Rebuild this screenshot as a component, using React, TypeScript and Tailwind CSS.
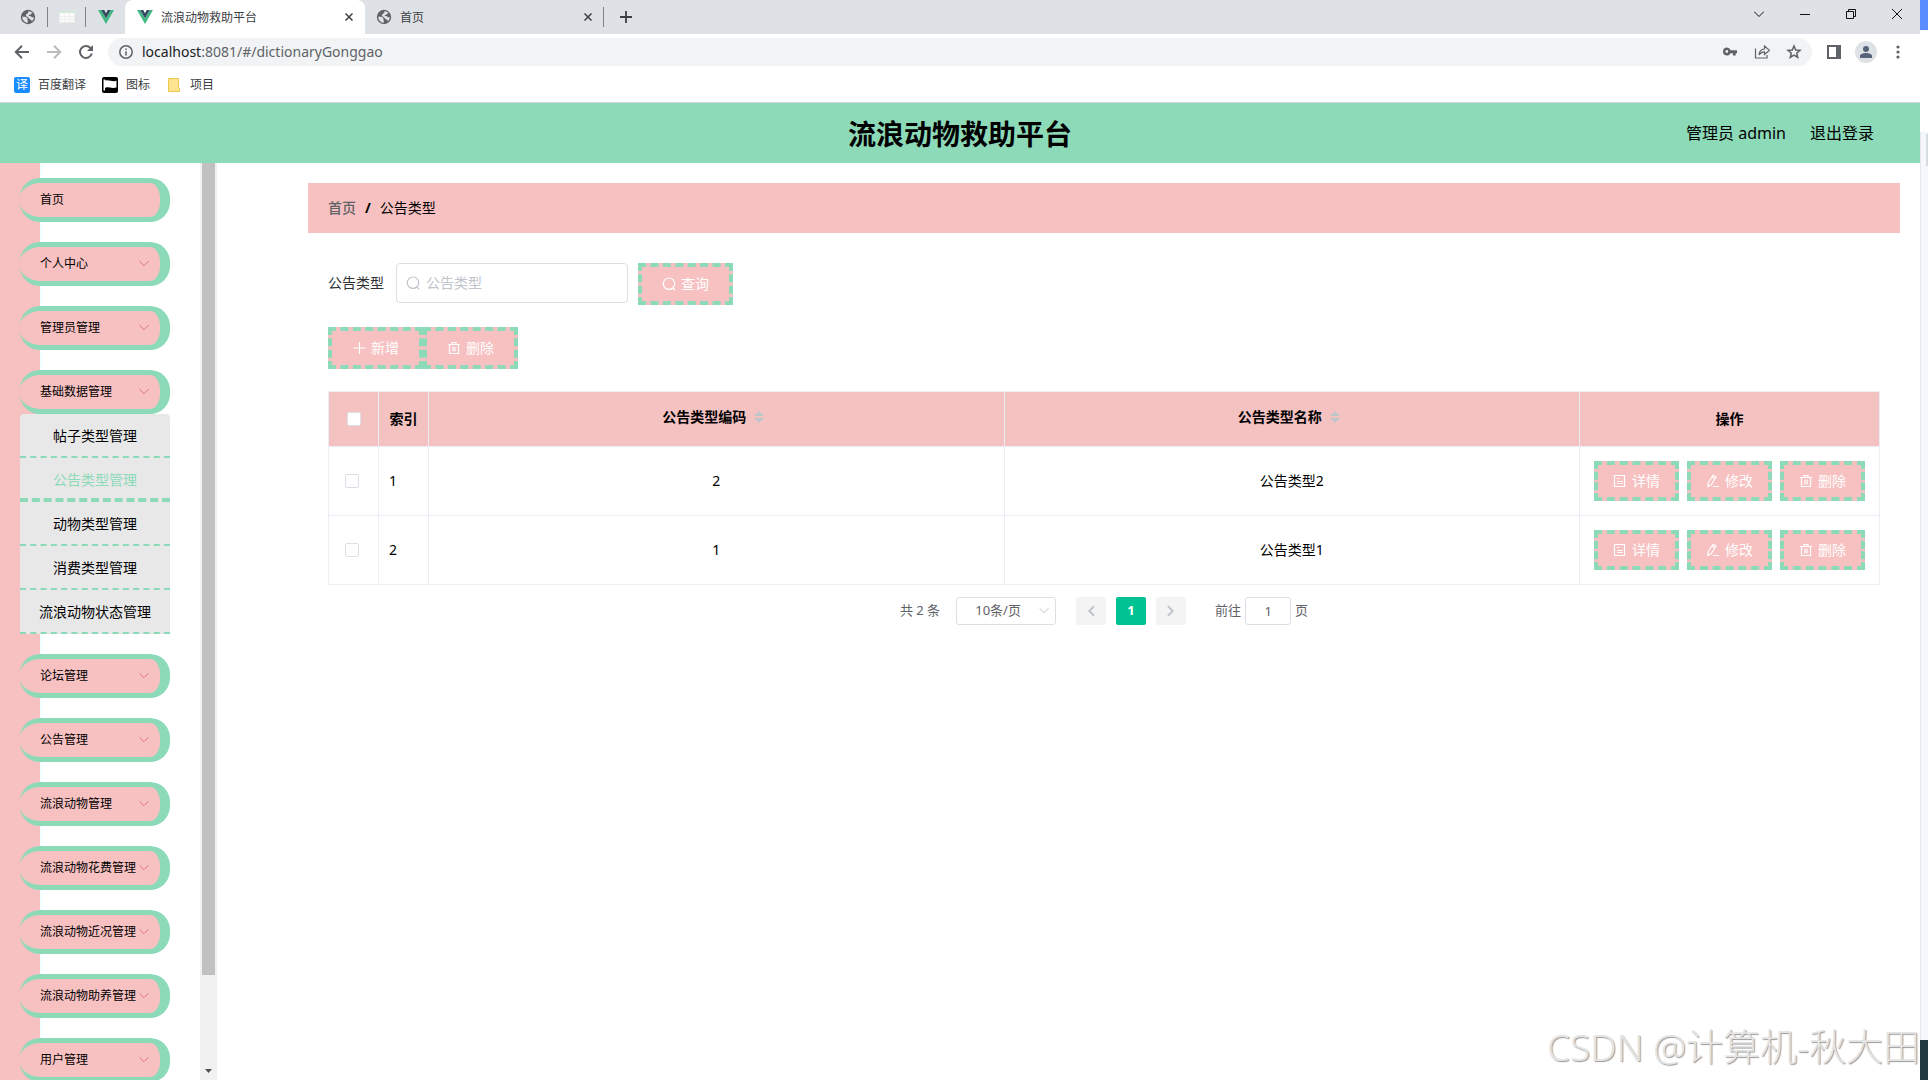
import React from 'react';

const CJK = "font-['Noto_Sans','Noto_Sans_CJK_SC',sans-serif]";

interface IconProps {
  className?: string;
}

const VueLogo: React.FC<IconProps> = ({ className = 'size-4' }) => (
  <svg viewBox="0 0 16 16" className={className} aria-hidden="true">
    <path d="M0 1h3.2L8 9.3 12.8 1H16L8 15z" fill="#41b883" />
    <path d="M3.2 1h3L8 4.2 9.8 1h3L8 9.3z" fill="#34495e" />
  </svg>
);

const GlobeIcon: React.FC<IconProps> = ({ className = 'size-4' }) => (
  <svg viewBox="0 0 16 16" className={className} aria-hidden="true">
    <circle cx="8" cy="8" r="7.2" fill="#5f6368" />
    <path
      d="M2.300 7.500c1.800.2 4 .2 5 1.500.6 1-.3 1.500.3 2.200.7.600.1 1.300-.1 2.700A6 6 0 0 1 2.300 7.500zM8.200 2.300c1.500-.3 3.300.5 4.300 1.700-.6.700-1.600.4-1.800 1.200-.3.900-2 .4-2 1.300 0 .8 2 .3 2.800 1.200.5.800 1.400.5 2.300.3 0 1.800-.8 3.300-1.900 4.200-.5-.9-.9-1.700-1.900-1.900-1.300-.3-1.200-1.800-2.500-2.200C6.200 7.700 5.300 6.200 6.300 5.300c.8-.7 2.700-.8 1.900-3z"
      fill="#dee1e6"
    />
  </svg>
);

const SheetIcon = () => (
  <svg viewBox="0 0 16 16" className="size-4" aria-hidden="true">
    <rect x="0.500" y="2.500" width="15" height="11" fill="#fafafa" stroke="#ebebeb" />
    <rect x="0" y="2" width="16" height="2" fill="#d3ead9" />
    <path d="M1 7.500h14M1 10.500h14M5.500 5v8M10.500 5v8" stroke="#f0f0f0" />
  </svg>
);

const CloseIcon: React.FC<IconProps> = ({ className = 'size-2' }) => (
  <svg viewBox="0 0 8 8" className={className} aria-hidden="true">
    <path d="M.5.5l7 7M7.500.5l-7 7" stroke="#3c4043" strokeWidth="1.500" fill="none" />
  </svg>
);

const SearchIcon = () => (
  <svg viewBox="0 0 14 14" className="size-[14px]" fill="none" stroke="currentColor" strokeWidth="1.200" strokeLinecap="round" aria-hidden="true">
    <circle cx="7" cy="6.700" r="5.700" />
    <path d="M11 11.200l1.800 1.600" />
  </svg>
);

const PlusIcon = () => (
  <svg viewBox="0 0 14 14" className="size-[14px]" stroke="currentColor" strokeWidth="1.200" strokeLinecap="round" aria-hidden="true">
    <path d="M7.500 1.500v11M2 7h11" />
  </svg>
);

const TrashIcon = () => (
  <svg viewBox="0 0 14 14" className="size-[14px]" fill="none" stroke="currentColor" strokeWidth="1.200" strokeLinecap="round" aria-hidden="true">
    <path d="M1.500 3.500h11M2.500 3.500v9h9v-9M5 3.500V1.500h4v2M6 6v4M8 6v4" />
  </svg>
);

const DocIcon = () => (
  <svg viewBox="0 0 14 14" className="size-[14px]" fill="none" stroke="currentColor" strokeWidth="1.200" strokeLinecap="round" aria-hidden="true">
    <path d="M1.500 1.500h10v11h-10zM4.500 4.500h1.500M4.500 7.500h4.500M4.500 9.500h4.500" />
  </svg>
);

const EditIcon = () => (
  <svg viewBox="0 0 14 14" className="size-[14px]" fill="none" stroke="currentColor" strokeWidth="1.200" strokeLinecap="round" strokeLinejoin="round" aria-hidden="true">
    <path d="M7 1.200l3 1.800-4.800 7.800-3.400 1.700.4-3.700zM6 3l3 1.800M7.500 12.500h5" />
  </svg>
);

const Chevron: React.FC<IconProps> = ({ className = '' }) => (
  <svg viewBox="0 0 12 12" className={`size-3 shrink-0 ${className}`} fill="none" stroke="currentColor" strokeLinecap="round" aria-hidden="true">
    <path d="M1.800 3.500L6 7.700l4.200-4.200" />
  </svg>
);

const SortCarets = () => (
  <svg viewBox="0 0 10 14" className="h-[14px] w-[10px]" fill="#c0c4cc" aria-hidden="true">
    <path d="M5 1l5 5H0zM5 13L0 8h10z" />
  </svg>
);

const TabStrip = () => (
  <div className="flex h-[34px] items-stretch bg-[#dee1e6] text-xs text-[#3c4043]">
    <div className="flex items-center pr-[11px] pl-5">
      <GlobeIcon />
      <span className="mx-[11px] h-5 w-px bg-[#808387]" />
      <SheetIcon />
      <span className="mr-3 ml-[10px] h-5 w-px bg-[#808387]" />
      <VueLogo />
    </div>
    <div className="flex w-60 items-center gap-2 rounded-t-lg bg-white px-3">
      <VueLogo />
      <span className="flex-1 pt-px">流浪动物救助平台</span>
      <button aria-label="关闭标签页">
        <CloseIcon />
      </button>
    </div>
    <div className="flex w-[238px] items-center gap-2 rounded-bl-lg pr-[11px] pl-[11px]">
      <GlobeIcon />
      <span className="flex-1 pt-px">首页</span>
      <button aria-label="关闭标签页">
        <CloseIcon />
      </button>
    </div>
    <span className="h-5 w-px self-center bg-[#808387]" />
    <button className="ml-4" aria-label="新标签页">
      <svg viewBox="0 0 12 12" className="size-3" stroke="#3c4043" strokeWidth="1.800" aria-hidden="true">
        <path d="M6 0v12M0 6h12" />
      </svg>
    </button>
    <div className="ml-auto flex items-center gap-9 pr-[18px] pb-[6px] text-[#111]">
      <button aria-label="搜索标签页">
        <svg viewBox="0 0 10 10" className="size-[10px]" fill="none" stroke="currentColor">
          <path d="M0 2.500l5 5 5-5" />
        </svg>
      </button>
      <button aria-label="最小化">
        <svg viewBox="0 0 10 10" className="size-[10px]" stroke="currentColor">
          <path d="M0 5.500h10" />
        </svg>
      </button>
      <button aria-label="还原">
        <svg viewBox="0 0 10 10" className="size-[10px]" fill="none" stroke="currentColor">
          <path d="M.5 2.500h7v7h-7zM2.500 2.500v-2h7v7h-2" />
        </svg>
      </button>
      <button aria-label="关闭">
        <svg viewBox="0 0 10 10" className="size-[10px]" fill="none" stroke="currentColor">
          <path d="M0 0l10 10M10 0L0 10" />
        </svg>
      </button>
    </div>
  </div>
);

const AddressBar = () => (
  <div className="flex h-9 items-center px-[14px] text-[#5f6368]">
    <button aria-label="后退">
      <svg viewBox="0 0 16 16" className="size-4" fill="none" stroke="#5f6368" strokeWidth="2">
        <path d="M15 8H2M8 1.800L1.800 8 8 14.200" />
      </svg>
    </button>
    <button className="ml-4" aria-label="前进">
      <svg viewBox="0 0 16 16" className="size-4" fill="none" stroke="#babcbe" strokeWidth="2">
        <path d="M1 8h13M8 1.800L14.200 8 8 14.200" />
      </svg>
    </button>
    <button className="ml-4" aria-label="重新加载">
      <svg viewBox="0 0 16 16" className="size-4" fill="none" stroke="#5f6368" strokeWidth="2">
        <path d="M13.800 9.500A6 6 0 1 1 12.500 4L14 5.500" />
        <path d="M15 1v6H9z" fill="#5f6368" stroke="none" />
      </svg>
    </button>
    <div className="ml-[14px] flex h-7 flex-1 items-center rounded-full bg-[#f1f3f4] pr-[10px] pl-[11px]">
      <svg viewBox="0 0 14 14" className="size-[14px]" fill="none" stroke="currentColor" strokeWidth="1.500" aria-hidden="true">
        <circle cx="7" cy="7" r="6.200" />
        <path d="M7 6.200v4.300M7 3.500V5" />
      </svg>
      <span className="ml-[9px] flex-1 text-sm">
        <span className="text-[#202124]">localhost</span>:8081/#/dictionaryGonggao
      </span>
      <button aria-label="密码">
        <svg viewBox="0 0 16 16" className="size-4" fill="currentColor">
          <path fillRule="evenodd" d="M4.800 3.500a4 4 0 0 1 3.800 2.700H15v3h-1.300v2.300h-2.800V9.200H8.600A4 4 0 1 1 4.800 3.500zm0 2.600a1.400 1.400 0 1 0 0 2.800 1.400 1.400 0 0 0 0-2.800z" />
        </svg>
      </button>
      <button className="ml-4" aria-label="分享">
        <svg viewBox="0 0 16 16" className="size-4" fill="none" stroke="currentColor" strokeWidth="1.200">
          <path d="M1.500 4.500V14h11.500v-3M5 11c.3-4 2.500-5.800 5.500-6V2l5 4.300-5 4.200V7.800C8 7.800 6.500 8.700 5 11z" />
        </svg>
      </button>
      <button className="ml-4" aria-label="收藏">
        <svg viewBox="0 0 16 16" className="size-4" fill="none" stroke="currentColor" strokeWidth="1.500">
          <path d="M8 2l1.700 4.100 4.300.3-3.300 2.800 1 4.300L8 11.200l-3.700 2.300 1-4.300L2 6.400l4.300-.3z" />
        </svg>
      </button>
    </div>
    <button className="ml-[15px]" aria-label="侧边栏">
      <svg viewBox="0 0 14 14" className="size-[14px]" fill="currentColor">
        <path fillRule="evenodd" d="M0 0h14v14H0zM2 2v10h7V2z" />
      </svg>
    </button>
    <button className="ml-[14px] grid size-[22px] place-items-center rounded-full bg-[#dee1e6]" aria-label="用户">
      <svg viewBox="0 0 12 12" className="size-3" fill="#56627a">
        <circle cx="6" cy="3" r="3" />
        <path d="M0 12V10c0-2 3-3 6-3s6 1 6 3v2z" />
      </svg>
    </button>
    <button className="ml-[13px]" aria-label="菜单">
      <svg viewBox="0 0 16 16" className="size-4" fill="currentColor">
        <circle cx="8" cy="3" r="1.600" />
        <circle cx="8" cy="8" r="1.600" />
        <circle cx="8" cy="13" r="1.600" />
      </svg>
    </button>
  </div>
);

const Bookmarks = () => (
  <nav className="flex h-[33px] items-center border-b border-[#d5d7da] pb-[3px] pl-[14px] text-xs text-[#3c4043]">
    <a href="#fanyi" className="flex items-center gap-2">
      <span className="grid size-4 place-items-center rounded-xs bg-[#1a8cff] leading-4 text-white">译</span>
      百度翻译
    </a>
    <a href="#icons" className="ml-4 flex items-center gap-2">
      <svg viewBox="0 0 16 16" className="size-4" aria-hidden="true">
        <rect width="16" height="16" rx="2" fill="#000" />
        <path d="M1.500 2.500v11H3V11c2-2 6 1 11.500-.5V3.500c-3 2-7-1-11.500 0v-1z" fill="#fff" />
      </svg>
      图标
    </a>
    <a href="#projects" className="ml-[18px] flex items-center gap-[10px]">
      <svg viewBox="0 0 12 14" className="h-[14px] w-3" aria-hidden="true">
        <path d="M.5.5h10v9l1 1v3H.5z" fill="#ffe48f" stroke="#ecc94b" />
      </svg>
      项目
    </a>
  </nav>
);

interface MenuEntry {
  label: string;
  link?: boolean;
  children?: string[];
}

const menu: MenuEntry[] = [
  { label: '首页', link: true },
  { label: '个人中心' },
  { label: '管理员管理' },
  {
    label: '基础数据管理',
    children: ['帖子类型管理', '公告类型管理', '动物类型管理', '消费类型管理', '流浪动物状态管理'],
  },
  { label: '论坛管理' },
  { label: '公告管理' },
  { label: '流浪动物管理' },
  { label: '流浪动物花费管理' },
  { label: '流浪动物近况管理' },
  { label: '流浪动物助养管理' },
  { label: '用户管理' },
];

const ACTIVE = '公告类型管理';

const Sidebar = () => (
  <aside className="flex w-[217px] shrink-0 overflow-hidden">
    <div className="flex-1 overflow-hidden bg-[linear-gradient(to_right,#f7c1c1_40px,#f0ffff_40px,#ffffff_44px)] pl-5">
      <ul className="w-[150px] pt-[15px]">
        {menu.map((item) => (
          <li key={item.label} className="mb-5">
            <button className="flex h-11 w-full items-center justify-between rounded-[20px] border-y-[5px] border-r-[10px] border-[#8cdab8] bg-[#f7c1c1] pr-[10px] pl-5 text-xs whitespace-nowrap text-black">
              {item.label}
              {!item.link && <Chevron className="text-[#db7093]" />}
            </button>
            {item.children && (
              <ul className="overflow-hidden rounded-t-sm bg-[#e8e8e8] text-center text-sm">
                {item.children.map((child) => (
                  <li key={child}>
                    <a
                      href={`#${child}`}
                      className={`block h-11 border-dashed border-[#8cdab8] leading-[44px] ${
                        child === ACTIVE ? 'border-b-4 text-[#8cdab8]' : 'border-b-2 text-black'
                      }`}
                    >
                      {child}
                    </a>
                  </li>
                ))}
              </ul>
            )}
          </li>
        ))}
      </ul>
    </div>
    <div className="flex w-[17px] flex-col items-center bg-[#f1f1f1]">
      <div className="w-[13px] flex-[812] bg-[#c1c1c1]" />
      <div className="flex flex-[105] items-end">
        <svg viewBox="0 0 7 4" className="mb-[7px] h-1 w-[7px]" fill="#505050" aria-hidden="true">
          <path d="M0 0h7L3.500 4z" />
        </svg>
      </div>
    </div>
  </aside>
);

interface ActionButtonProps {
  icon: React.ReactNode;
  children: React.ReactNode;
  small?: boolean;
}

const ActionButton: React.FC<ActionButtonProps> = ({ icon, children, small }) => (
  <button
    className={`flex items-center justify-center gap-[5px] border-4 border-dashed border-[#8cdab8] bg-[#f7c1c1] text-sm text-white ${
      small ? 'h-10 w-[85px]' : 'h-[42px] w-[95px]'
    }`}
  >
    {icon}
    {children}
  </button>
);

const rows = [
  { index: 1, code: 2, name: '公告类型2' },
  { index: 2, code: 1, name: '公告类型1' },
];

const DataTable = () => (
  <table className="mt-[22px] w-full table-fixed border-collapse text-center text-sm text-black">
    <colgroup>
      <col className="w-[50px]" />
      <col className="w-[50px]" />
      <col />
      <col />
      <col className="w-[300px]" />
    </colgroup>
    <thead>
      <tr className="h-[55px] bg-[#f5c2c2] *:border *:border-[#ebeef5] *:font-bold">
        <th>
          <input type="checkbox" aria-label="全选" className="mx-auto block size-[14px] appearance-none rounded-xs border border-[#dcdfe6] bg-white" />
        </th>
        <th>索引</th>
        <th>
          <span className="flex items-center justify-center gap-2 pr-[6px] pb-1">
            公告类型编码 <SortCarets />
          </span>
        </th>
        <th>
          <span className="flex items-center justify-center gap-2 pr-[6px] pb-1">
            公告类型名称 <SortCarets />
          </span>
        </th>
        <th>操作</th>
      </tr>
    </thead>
    <tbody>
      {rows.map((row) => (
        <tr key={row.index} className="h-[69px] *:border *:border-[#ebeef5]">
          <td>
            <input
              type="checkbox"
              aria-label={`选择第${row.index}行`}
              className="ml-4 block size-[14px] appearance-none rounded-xs border border-[#dcdfe6] bg-white"
            />
          </td>
          <td className="pl-[10px] text-left">{row.index}</td>
          <td>{row.code}</td>
          <td>{row.name}</td>
          <td>
            <div className="flex justify-center gap-2">
              <ActionButton small icon={<DocIcon />}>详情</ActionButton>
              <ActionButton small icon={<EditIcon />}>修改</ActionButton>
              <ActionButton small icon={<TrashIcon />}>删除</ActionButton>
            </div>
          </td>
        </tr>
      ))}
    </tbody>
  </table>
);

const Pagination = () => (
  <div className="mt-3 flex items-center justify-center text-[13px] text-[#606266]">
    <span>共 2 条</span>
    <div className="relative ml-4">
      <select
        aria-label="每页条数"
        className="h-7 w-[100px] appearance-none rounded-[3px] border border-[#dcdfe6] bg-white pr-4 text-center"
      >
        <option>10条/页</option>
      </select>
      <Chevron className="pointer-events-none absolute top-2 right-[6px] text-[#c0c4cc]" />
    </div>
    <div className="ml-5 flex gap-[10px]">
      <button className="grid h-7 w-[30px] place-items-center rounded-xs bg-[#f4f4f5] text-[#c0c4cc]" aria-label="上一页">
        <Chevron className="rotate-90 stroke-2" />
      </button>
      <button className="h-7 w-[30px] rounded-xs bg-[#00c292] font-bold text-white">1</button>
      <button className="grid h-7 w-[30px] place-items-center rounded-xs bg-[#f4f4f5] text-[#c0c4cc]" aria-label="下一页">
        <Chevron className="-rotate-90 stroke-2" />
      </button>
    </div>
    <label className="ml-[29px] flex items-center gap-1">
      前往
      <input defaultValue="1" className="h-7 w-[46px] rounded-[3px] border border-[#dcdfe6] text-center" />
      页
    </label>
  </div>
);

const Content = () => (
  <main className="min-w-0 flex-1 pt-5 pr-5 pl-[91px]">
    <nav className="flex h-[50px] items-center bg-[#f7c1c1] px-5 text-sm text-black">
      <a href="#home" className="font-medium text-[#606266]">首页</a>
      <span className="mx-[9px] font-bold">/</span>
      <span>公告类型</span>
    </nav>
    <div className="px-5 pt-[30px]">
      <form className="flex items-start">
        <label htmlFor="type" className="pr-3 text-sm leading-10 text-[#303133]">公告类型</label>
        <div className="flex h-10 w-[232px] items-center gap-[6px] rounded-sm border border-[#dcdfe6] px-[9px] text-[#c0c4cc]">
          <SearchIcon />
          <input id="type" placeholder="公告类型" className="min-w-0 flex-1 text-sm outline-none placeholder:text-[#c0c4cc]" />
        </div>
        <div className="ml-[10px]">
          <ActionButton icon={<SearchIcon />}>查询</ActionButton>
        </div>
      </form>
      <div className="mt-[22px] flex">
        <ActionButton icon={<PlusIcon />}>新增</ActionButton>
        <ActionButton icon={<TrashIcon />}>删除</ActionButton>
      </div>
      <DataTable />
      <Pagination />
    </div>
  </main>
);

const App = () => (
  <div className={`relative flex h-screen overflow-hidden bg-white ${CJK}`}>
    <div className="flex min-w-0 flex-1 flex-col">
      <TabStrip />
      <AddressBar />
      <Bookmarks />
      <header className="grid h-[60px] shrink-0 grid-cols-[1fr_auto_1fr] items-center bg-[#8cdab8] text-black">
        <h1 className="col-start-2 pt-px text-[28px] font-bold">流浪动物救助平台</h1>
        <div className="flex justify-end gap-6 pr-[46px] text-base">
          <span>管理员 admin</span>
          <a href="#logout">退出登录</a>
        </div>
      </header>
      <div className="flex min-h-0 flex-1">
        <Sidebar />
        <Content />
      </div>
    </div>
    {/* edge of the window lying behind */}
    <div className="flex w-2 flex-col">
      <div className="h-[30px] bg-[#5b8cff]" />
      <div className="h-[102px] bg-white" />
      <div className="flex-1 border-l border-[#e4e7ed] bg-[#f5f7fa] pt-[2px]">
        <div className="ml-auto h-8 w-[2px] bg-[#d5dce2]" />
      </div>
      <div className="h-10 bg-[#243b42]" />
    </div>
    <div className="pointer-events-none absolute right-2 bottom-[10px] text-[37px] leading-[46px] font-light whitespace-nowrap text-[#e4e4e4] [text-shadow:1px_1px_1px_#999]">
      CSDN @计算机-秋大田
    </div>
  </div>
);

export default App;
